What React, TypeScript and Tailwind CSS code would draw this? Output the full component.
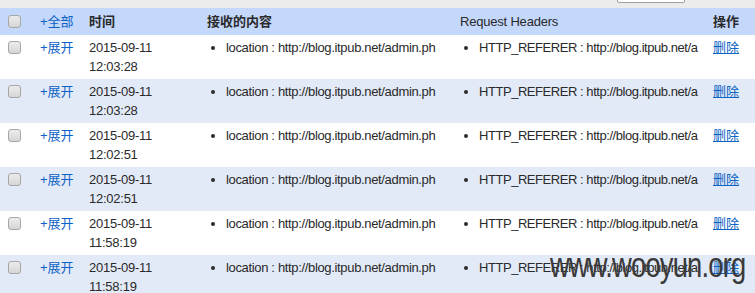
import React from "react";

const ROWS = [
  { date: "2015-09-11", time: "12:03:28" },
  { date: "2015-09-11", time: "12:03:28" },
  { date: "2015-09-11", time: "12:02:51" },
  { date: "2015-09-11", time: "12:02:51" },
  { date: "2015-09-11", time: "11:58:19" },
  { date: "2015-09-11", time: "11:58:19" },
];

function Check() {
  return (
    <span className="mt-[3px] block h-[13px] w-[13px] rounded-[3px] border border-[#a6a6a6] bg-gradient-to-b from-[#ececec] to-[#d6d6d6]" />
  );
}

export default function App() {
  return (
    <div
      className="relative h-[293px] w-[755px] overflow-hidden bg-white text-[13px] leading-[19px] text-[#2a2a2a]"
      style={{ fontFamily: '"Liberation Sans", Arial, "Noto Sans CJK SC", sans-serif' }}
    >
      {/* top toolbar strip */}
      <div className="flex h-2 overflow-hidden bg-[#ebebeb]">
        <div className="ml-[617px] mt-[-21px] h-[24px] w-[68px] rounded-[2px] border border-[#a0a0a0] bg-white" />
      </div>

      <table className="w-[755px] table-fixed border-collapse">
        <colgroup>
          <col className="w-[32px]" />
          <col className="w-[49px]" />
          <col className="w-[118px]" />
          <col className="w-[253px]" />
          <col className="w-[253px]" />
          <col className="w-[50px]" />
        </colgroup>
        <thead>
          <tr className="bg-[#c4d8fc] text-left">
            <th className="py-1 pl-2 align-top font-normal">
              <Check />
            </th>
            <th className="py-1 pl-2 font-normal text-[#0b62c4]">+全部</th>
            <th className="py-1 pl-2 font-bold">时间</th>
            <th className="py-1 pl-2 font-bold">接收的内容</th>
            <th className="py-1 pl-2 font-normal tracking-[-0.2px]">Request Headers</th>
            <th className="py-1 pl-2 font-bold">操作</th>
          </tr>
        </thead>
        <tbody>
          {ROWS.map((r, i) => (
            <tr key={i} className={i % 2 === 1 ? "bg-[#e2e9f7]" : "bg-white"}>
              <td className="py-[3px] pl-2 align-top">
                <Check />
              </td>
              <td className="py-[3px] pl-2 align-top text-[#0b62c4]">+展开</td>
              <td className="py-[3px] pl-2 align-top tracking-[-0.25px]">
                {r.date}
                <br />
                {r.time}
              </td>
              <td className="py-[3px] pl-2 align-top">
                <ul className="w-[237px] list-disc overflow-hidden whitespace-nowrap pl-[19px] tracking-[-0.34px]">
                  <li>location : http://blog.itpub.net/admin.ph</li>
                </ul>
              </td>
              <td className="py-[3px] pl-2 align-top">
                <ul className="w-[242px] list-disc overflow-hidden whitespace-nowrap pl-[19px] tracking-[-0.45px]">
                  <li>HTTP_REFERER : http://blog.itpub.net/a</li>
                </ul>
              </td>
              <td className="py-[3px] pl-2 align-top">
                <a href="#" className="text-[#0b62c4] underline">
                  删除
                </a>
              </td>
            </tr>
          ))}
        </tbody>
      </table>

      {/* watermark */}
      <div className="pointer-events-none absolute left-[550px] top-[245px] origin-left scale-x-[0.78] whitespace-nowrap text-[35px] leading-[40px] tracking-[-1px] text-[#3a3a3a]">
        www.wooyun.org
      </div>
    </div>
  );
}
